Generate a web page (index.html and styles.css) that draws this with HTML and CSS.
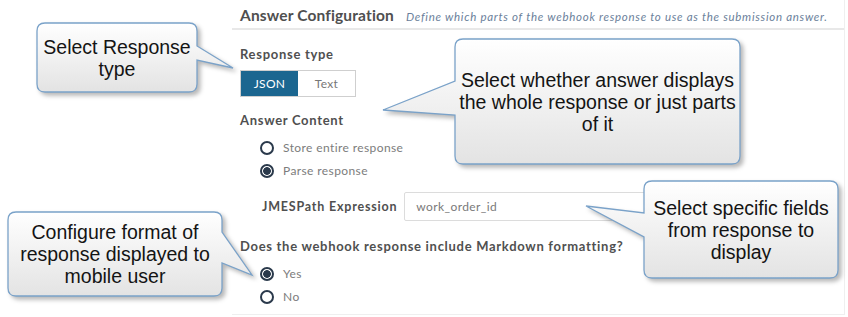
FILE: index.html
```html
<!DOCTYPE html>
<html lang="en">
<head>
    <meta charset="UTF-8">
    <title>Answer Configuration</title>
    <link rel="stylesheet" href="styles.css">
</head>
<body>
    <div class="panel">
        <div class="panel-head">
            <h2>Answer Configuration</h2>
            <span class="hint">Define which parts of the webhook response to use as the submission answer.</span>
        </div>

        <div class="label first">Response type</div>
        <div class="seg">
            <span class="seg-btn active">JSON</span>
            <span class="seg-btn">Text</span>
        </div>

        <div class="label">Answer Content</div>
        <div class="radios">
            <div class="radio"><span class="dot"></span>Store entire response</div>
            <div class="radio"><span class="dot on"></span>Parse response</div>
        </div>

        <div class="jmes">
            <span class="jmes-label">JMESPath Expression</span>
            <div class="input">work_order_id</div>
        </div>

        <div class="label md">Does the webhook response include Markdown formatting?</div>
        <div class="radios">
            <div class="radio"><span class="dot on"></span>Yes</div>
            <div class="radio"><span class="dot"></span>No</div>
        </div>
    </div>

    <!-- callouts laid over the form -->
    <div class="callout c1">
        <svg width="160" height="69"><path d="M8,0 H152 Q160,0 160,8 V23 L196,45 L160,37 V61 Q160,69 152,69 H8 Q0,69 0,61 V8 Q0,0 8,0 Z"/></svg>
        <p>Select Response<br>type</p>
    </div>
    <div class="callout c2">
        <svg width="285" height="125"><path d="M8,0 H277 Q285,0 285,8 V117 Q285,125 277,125 H8 Q0,125 0,117 V76 L-72,71 L0,42 V8 Q0,0 8,0 Z"/></svg>
        <p>Select whether answer displays<br>the whole response or just parts<br>of it</p>
    </div>
    <div class="callout c3">
        <svg width="194" height="97"><path d="M8,0 H186 Q194,0 194,8 V89 Q194,97 186,97 H8 Q0,97 0,89 V56 L-58,25 L0,32 V8 Q0,0 8,0 Z"/></svg>
        <p>Select specific fields<br>from response to<br>display</p>
    </div>
    <div class="callout c4">
        <svg width="214" height="84"><path d="M8,0 H206 Q214,0 214,8 V20 L244,63 L214,51 V76 Q214,84 206,84 H8 Q0,84 0,76 V8 Q0,0 8,0 Z"/></svg>
        <p>Configure format of<br>response displayed to<br>mobile user</p>
    </div>

    <svg class="defs" width="0" height="0">
        <defs>
            <linearGradient id="fade" x1="0" y1="0" x2="0" y2="1">
                <stop offset="0" stop-color="#ffffff"/>
                <stop offset="1" stop-color="#e3e3e3"/>
            </linearGradient>
        </defs>
    </svg>
</body>
</html>
```

FILE: styles.css
```css
body {
    margin: 0;
    width: 848px;
    height: 317px;
    position: relative;
    overflow: hidden;
    background: #fff;
    font-family: Lato, "Open Sans", sans-serif;
    color: #4d4d4d;
}
.panel {
    margin-left: 232px;
    width: 612px;
    height: 314px;
    border-right: 1px solid #efefef;
    border-bottom: 1px solid #efefef;
}
.panel-head {
    display: flex;
    align-items: baseline;
    gap: 12px;
    height: 28px;
    padding: 0 8px;
    border-bottom: 2px solid #e8e8e8;
}
.panel-head h2 {
    margin: 0;
    font-size: 15.5px;
    font-weight: 700;
    line-height: 30px;
    letter-spacing: 0.15px;
    color: #4f4f4f;
}
.hint {
    font-size: 11.5px;
    font-style: italic;
    letter-spacing: 0.72px;
    color: #6b7f9b;
}
.label {
    margin: 15px 0 0 8px;
    font-size: 13px;
    font-weight: 700;
    line-height: 16px;
    letter-spacing: 0.7px;
    color: #505050;
}
.label.first { margin-top: 16px; }
.label.md { margin-top: 17px; }
.seg {
    display: flex;
    margin: 8px 0 0 8px;
    width: 116px;
    height: 27px;
    border: 1px solid #cfcfcf;
    box-sizing: border-box;
}
.seg-btn {
    flex: 1;
    display: flex;
    align-items: center;
    justify-content: center;
    font-size: 12px;
    letter-spacing: 0.3px;
    color: #777;
}
.seg-btn.active {
    background: #1b6690;
    color: #fff;
}
.radios {
    margin: 8px 0 0 28px;
}
.radio {
    display: flex;
    align-items: center;
    gap: 9px;
    height: 23px;
    font-size: 12px;
    letter-spacing: 0.4px;
    color: #7c7c7c;
}
.dot {
    width: 14px;
    height: 14px;
    box-sizing: border-box;
    border: 2px solid #2a394b;
    border-radius: 50%;
}
.dot.on {
    background: radial-gradient(circle, #2a394b 0 3.5px, #fff 4.2px);
}
.jmes {
    display: flex;
    align-items: center;
    gap: 7px;
    margin: 10px 0 0 30px;
}
.jmes-label {
    font-size: 12.5px;
    font-weight: 700;
    letter-spacing: 0.8px;
    color: #505050;
}
.input {
    width: 300px;
    height: 29px;
    box-sizing: border-box;
    border: 1px solid #dcdcdc;
    border-radius: 2px;
    padding-left: 11px;
    display: flex;
    align-items: center;
    font-size: 12px;
    letter-spacing: 0.4px;
    color: #7a7a7a;
}

.callout {
    position: absolute;
    display: flex;
    align-items: center;
    justify-content: center;
    text-align: center;
}
.callout svg {
    position: absolute;
    left: 0;
    top: 0;
    overflow: visible;
    filter: drop-shadow(3px 3px 2px rgba(0,0,0,0.28));
}
.callout path {
    fill: url(#fade);
    stroke: #7aa2c9;
    stroke-width: 1.3;
}
.callout p {
    position: relative;
    margin: 0;
    font-family: "Liberation Sans", Arial, sans-serif;
    font-size: 19.5px;
    line-height: 22px;
    color: #141414;
}
.c1 { left: 37px; top: 23px; width: 160px; height: 69px; }
.c2 { left: 455px; top: 39px; width: 285px; height: 125px; }
.c3 { left: 644px; top: 181px; width: 194px; height: 97px; }
.c4 { left: 8px; top: 212px; width: 214px; height: 84px; }
.defs { position: absolute; }
```
